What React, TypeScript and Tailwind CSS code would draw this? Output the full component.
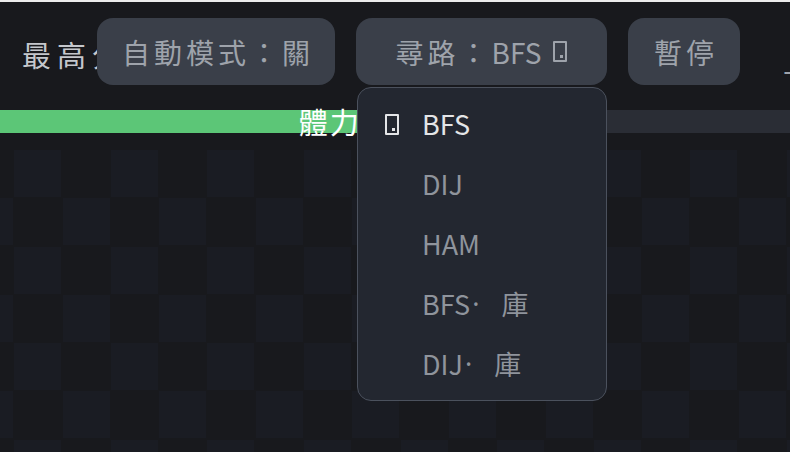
import React from "react";

const ROWS = 7;
const COLS = 18;

const options = [
  { label: "BFS", lib: false, active: true },
  { label: "DIJ", lib: false, active: false },
  { label: "HAM", lib: false, active: false },
  { label: "BFS", lib: true, active: false },
  { label: "DIJ", lib: true, active: false },
];

function Tofu({ className }: { className?: string }) {
  return (
    <span
      className={
        "relative inline-block w-[14px] h-[21px] border-2 border-current rounded-[1px] " +
        (className ?? "")
      }
    >
      <span className="absolute right-[2px] bottom-[2px] w-[3px] h-[3px] bg-current" />
    </span>
  );
}

export default function App() {
  return (
    <div
      className="relative w-[790px] h-[452px] overflow-hidden bg-[#18191d] text-[#a0a4ab]"
      style={{ fontFamily: '"Noto Sans CJK TC", "Noto Sans", sans-serif' }}
    >
      <div className="h-[2px] bg-[#ececec]" />

      {/* header */}
      <div className="relative h-[108px]">
        <div className="pl-[22px] pt-[32px] text-[29px] leading-[40px] tracking-[6px] text-[#c4c7cc]">
          最高分：128
        </div>

        <div className="absolute left-[97px] top-[16px] flex items-center gap-[21px]">
          <button className="h-[67px] w-[238px] rounded-[16px] bg-[#3a3f49] pl-[4px] text-[28px] tracking-[4px] text-[#9ea3ab]">
            自動模式：關
          </button>
          <button className="flex h-[67px] w-[251px] items-center justify-center gap-[12px] rounded-[16px] bg-[#3a3f49] text-[28px] text-[#9ea3ab]">
            <span>
              <span className="tracking-[4px]">尋路：</span>
              <span>BFS</span>
            </span>
            <Tofu />
          </button>
          <button className="h-[67px] w-[112px] rounded-[16px] bg-[#3a3f49] pl-[4px] text-[28px] tracking-[4px] text-[#9ea3ab]">
            暫停
          </button>
        </div>
        <span className="absolute left-[783px] top-[58px] text-[27px] leading-none text-[#9ea3ab]">
          十
        </span>
      </div>

      {/* health bar */}
      <div className="relative h-[23px] bg-[#2a2d35]">
        <div className="h-full w-[58%] bg-[#5cc677]" />
        <div className="absolute inset-0 flex items-center justify-center text-[29px] leading-none tracking-[2px] text-white">
          體力 100/100
        </div>
      </div>

      {/* board */}
      <div
        className="ml-[-34px] mt-[17px] grid gap-[1.3px]"
        style={{ gridTemplateColumns: `repeat(${COLS}, 47px)` }}
      >
        {Array.from({ length: ROWS * COLS }).map((_, i) => {
          const r = Math.floor(i / COLS);
          const c = i % COLS;
          return (
            <div
              key={i}
              className={
                (r + c) % 2 === 1
                  ? "h-[47px] bg-[#1a1c23]"
                  : "h-[47px] bg-[#18191d]"
              }
            />
          );
        })}
      </div>

      {/* pathfinding dropdown */}
      <div className="absolute left-[357px] top-[87px] w-[250px] rounded-[14px] border border-[#4b515d] bg-[#232730] py-[6px]">
        {options.map((o, i) => (
          <div
            key={i}
            className={
              "flex h-[60px] items-center text-[27px] " +
              (o.active ? "text-[#e4e5e7]" : "text-[#8f949c]")
            }
          >
            <span className="flex w-[64px] justify-center pl-[4px] pt-[1px]">
              {o.active && <Tofu />}
            </span>
            <span>{o.label}</span>
            {o.lib && (
              <>
                <span style={{ fontFamily: '"Noto Sans", sans-serif' }} className="pl-[2px] pr-[22px]">
                  ·
                </span>
                <span>庫</span>
              </>
            )}
          </div>
        ))}
      </div>
    </div>
  );
}
